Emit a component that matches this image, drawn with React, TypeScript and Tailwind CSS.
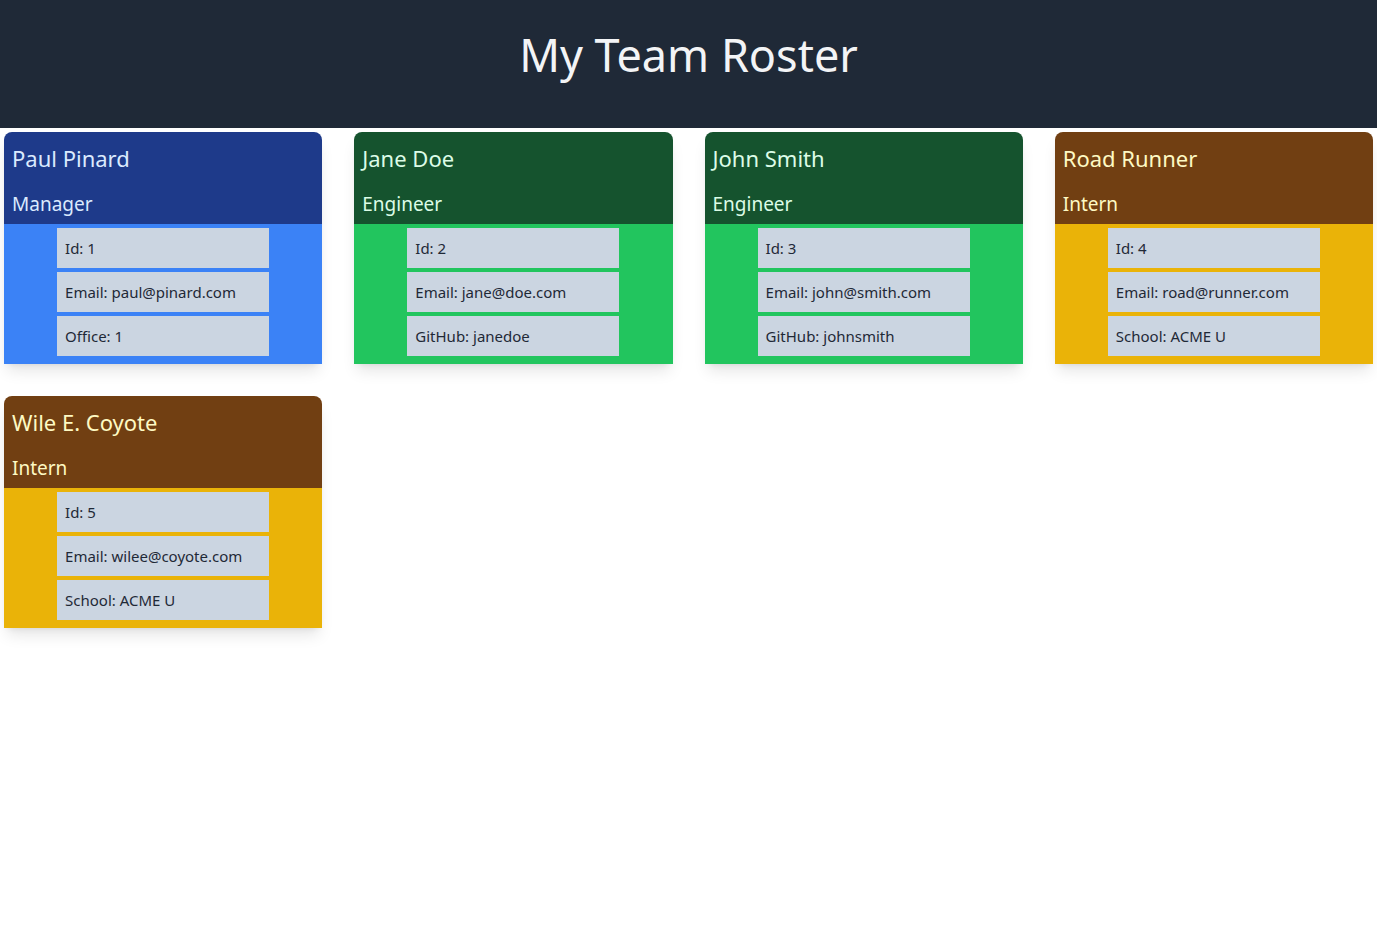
import React from "react";

type Member = {
  name: string;
  role: string;
  id: number;
  email: string;
  extra: string;
};

const members: Member[] = [
  { name: "Paul Pinard", role: "Manager", id: 1, email: "paul@pinard.com", extra: "Office: 1" },
  { name: "Jane Doe", role: "Engineer", id: 2, email: "jane@doe.com", extra: "GitHub: janedoe" },
  { name: "John Smith", role: "Engineer", id: 3, email: "john@smith.com", extra: "GitHub: johnsmith" },
  { name: "Road Runner", role: "Intern", id: 4, email: "road@runner.com", extra: "School: ACME U" },
  { name: "Wile E. Coyote", role: "Intern", id: 5, email: "wilee@coyote.com", extra: "School: ACME U" },
];

const styles: Record<string, { head: string; body: string }> = {
  Manager: { head: "bg-[#1e3a8a] text-[#dbeafe]", body: "bg-[#3b82f6]" },
  Engineer: { head: "bg-[#15532e] text-[#dcfce7]", body: "bg-[#22c55e]" },
  Intern: { head: "bg-[#713f12] text-[#fef9c3]", body: "bg-[#eab308]" },
};

function Card({ m }: { m: Member }) {
  const s = styles[m.role];
  return (
    <div className="rounded-t-lg overflow-hidden shadow-lg">
      <div className={`${s.head} pt-2.5 pb-1.5 px-2`}>
        <h2 className="text-[22px] leading-8 mb-4">{m.name}</h2>
        <h3 className="text-[19px] leading-7">{m.role}</h3>
      </div>
      <div className={`${s.body} pt-1 pb-2 flex flex-col gap-1 items-center`}>
        {[`Id: ${m.id}`, `Email: ${m.email}`, m.extra].map((t) => (
          <div key={t} className="w-2/3 h-10 flex items-center px-2 bg-[#cbd5e1] text-[#1f2937] text-[15px]">
            {t}
          </div>
        ))}
      </div>
    </div>
  );
}

export default function App() {
  return (
    <div className="min-h-screen bg-white" style={{ fontFamily: '"Segoe UI", "Noto Sans", sans-serif' }}>
      <header className="h-32 bg-[#1f2937] pt-[31px]">
        <h1 className="text-center text-[45px] leading-[48px] text-[#f3f4f6]">My Team Roster</h1>
      </header>
      <main className="grid grid-cols-4 gap-8 p-1">
        {members.map((m) => (
          <Card key={m.id} m={m} />
        ))}
      </main>
    </div>
  );
}
